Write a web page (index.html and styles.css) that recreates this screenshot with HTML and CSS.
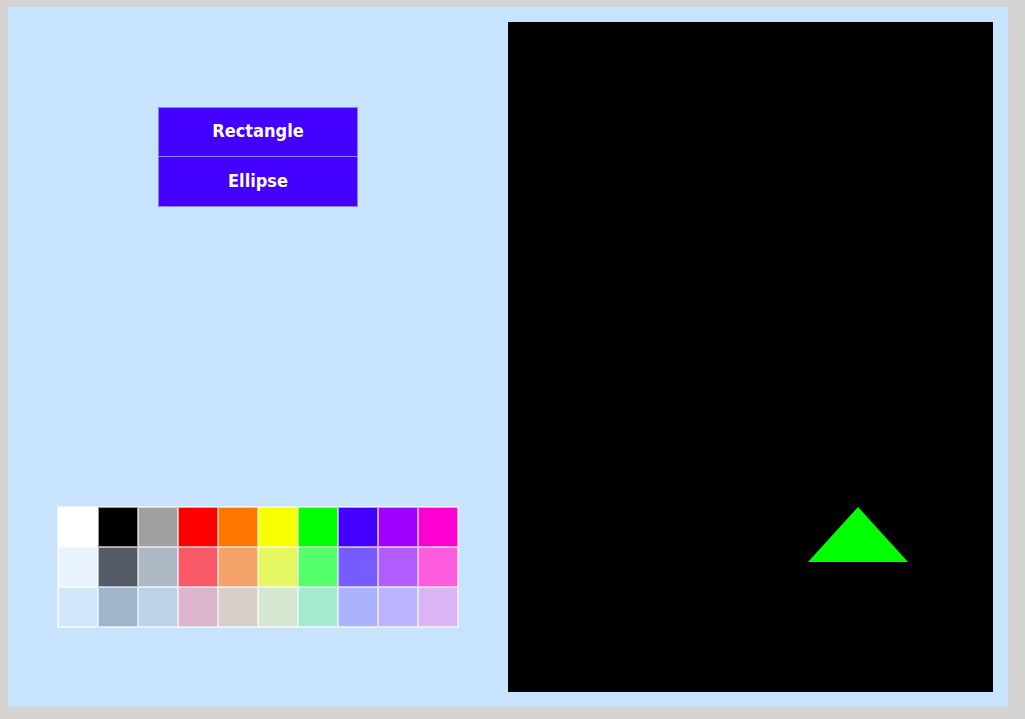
FILE: index.html
```html
<!DOCTYPE html>
<html>
<head>
<meta charset="utf-8">
<link rel="stylesheet" href="styles.css">
</head>
<body>
<div class="panel">
  <div class="left">
    <div class="tools">
      <button class="tool">Rectangle</button>
      <button class="tool">Ellipse</button>
    </div>
    <div class="palette">
      <div class="sw" style="background:#ffffff"></div>
      <div class="sw" style="background:#000000"></div>
      <div class="sw" style="background:#a0a0a0"></div>
      <div class="sw" style="background:#ff0000"></div>
      <div class="sw" style="background:#ff7700"></div>
      <div class="sw" style="background:#f8ff00"></div>
      <div class="sw" style="background:#00ff00"></div>
      <div class="sw" style="background:#4400ff"></div>
      <div class="sw" style="background:#a000ff"></div>
      <div class="sw" style="background:#ff00d0"></div>
      <div class="sw" style="background:#e8f3ff"></div>
      <div class="sw" style="background:#525b65"></div>
      <div class="sw" style="background:#adb8c4"></div>
      <div class="sw" style="background:#fa5a68"></div>
      <div class="sw" style="background:#f4a268"></div>
      <div class="sw" style="background:#e5f863"></div>
      <div class="sw" style="background:#52ff6b"></div>
      <div class="sw" style="background:#765cff"></div>
      <div class="sw" style="background:#b05cff"></div>
      <div class="sw" style="background:#ff5ce0"></div>
      <div class="sw" style="background:#d3e6fd"></div>
      <div class="sw" style="background:#a0b4cb"></div>
      <div class="sw" style="background:#bdd2e8"></div>
      <div class="sw" style="background:#dbb5cc"></div>
      <div class="sw" style="background:#d7ceca"></div>
      <div class="sw" style="background:#d3e8cf"></div>
      <div class="sw" style="background:#a4eacf"></div>
      <div class="sw" style="background:#abb3ff"></div>
      <div class="sw" style="background:#bcb4ff"></div>
      <div class="sw" style="background:#dab4f4"></div>
    </div>
  </div>
  <div class="right">
    <div class="canvas">
      <svg class="shapes" width="485" height="670" viewBox="0 0 485 670">
        <polygon points="350,485 400,540 300,540" fill="#00ff00"/>
      </svg>
    </div>
  </div>
</div>
</body>
</html>
```

FILE: styles.css
```css
html, body {
  margin: 0;
  padding: 0;
}
body {
  background: #d6d3d3;
  padding: 7px 8px;
  width: 1025px;
  height: 719px;
  box-sizing: border-box;
  overflow: hidden;
}
.panel {
  width: 1000px;
  height: 700px;
  background: #c8e3fe;
  display: flex;
}
.left {
  width: 500px;
  display: flex;
  flex-direction: column;
  padding-top: 100px;
  box-sizing: border-box;
}
.tools {
  margin-left: 150px;
  width: 200px;
  display: flex;
  flex-direction: column;
}
.tool {
  width: 200px;
  height: 50px;
  margin: 0;
  background: #4400ff;
  border: 1px solid #8c84ff;
  color: #ffffff;
  font-family: "DejaVu Sans Condensed", "DejaVu Sans", sans-serif;
  font-stretch: condensed;
  font-weight: bold;
  font-size: 18px;
  padding: 0 0 3px 0;
  box-sizing: border-box;
}
.tool + .tool {
  border-top: 0;
  height: 50px;
}
.palette {
  margin-top: 299px;
  margin-left: 49px;
  display: grid;
  grid-template-columns: repeat(10, 40px);
  grid-auto-rows: 40px;
  border: 1px solid rgba(255, 255, 255, 0.6);
  width: 400px;
}
.sw {
  border: 1px solid rgba(255, 255, 255, 0.6);
  box-sizing: border-box;
}
.right {
  padding-top: 15px;
}
.canvas {
  width: 485px;
  height: 670px;
  background: #000000;
}
.shapes {
  display: block;
}
```
